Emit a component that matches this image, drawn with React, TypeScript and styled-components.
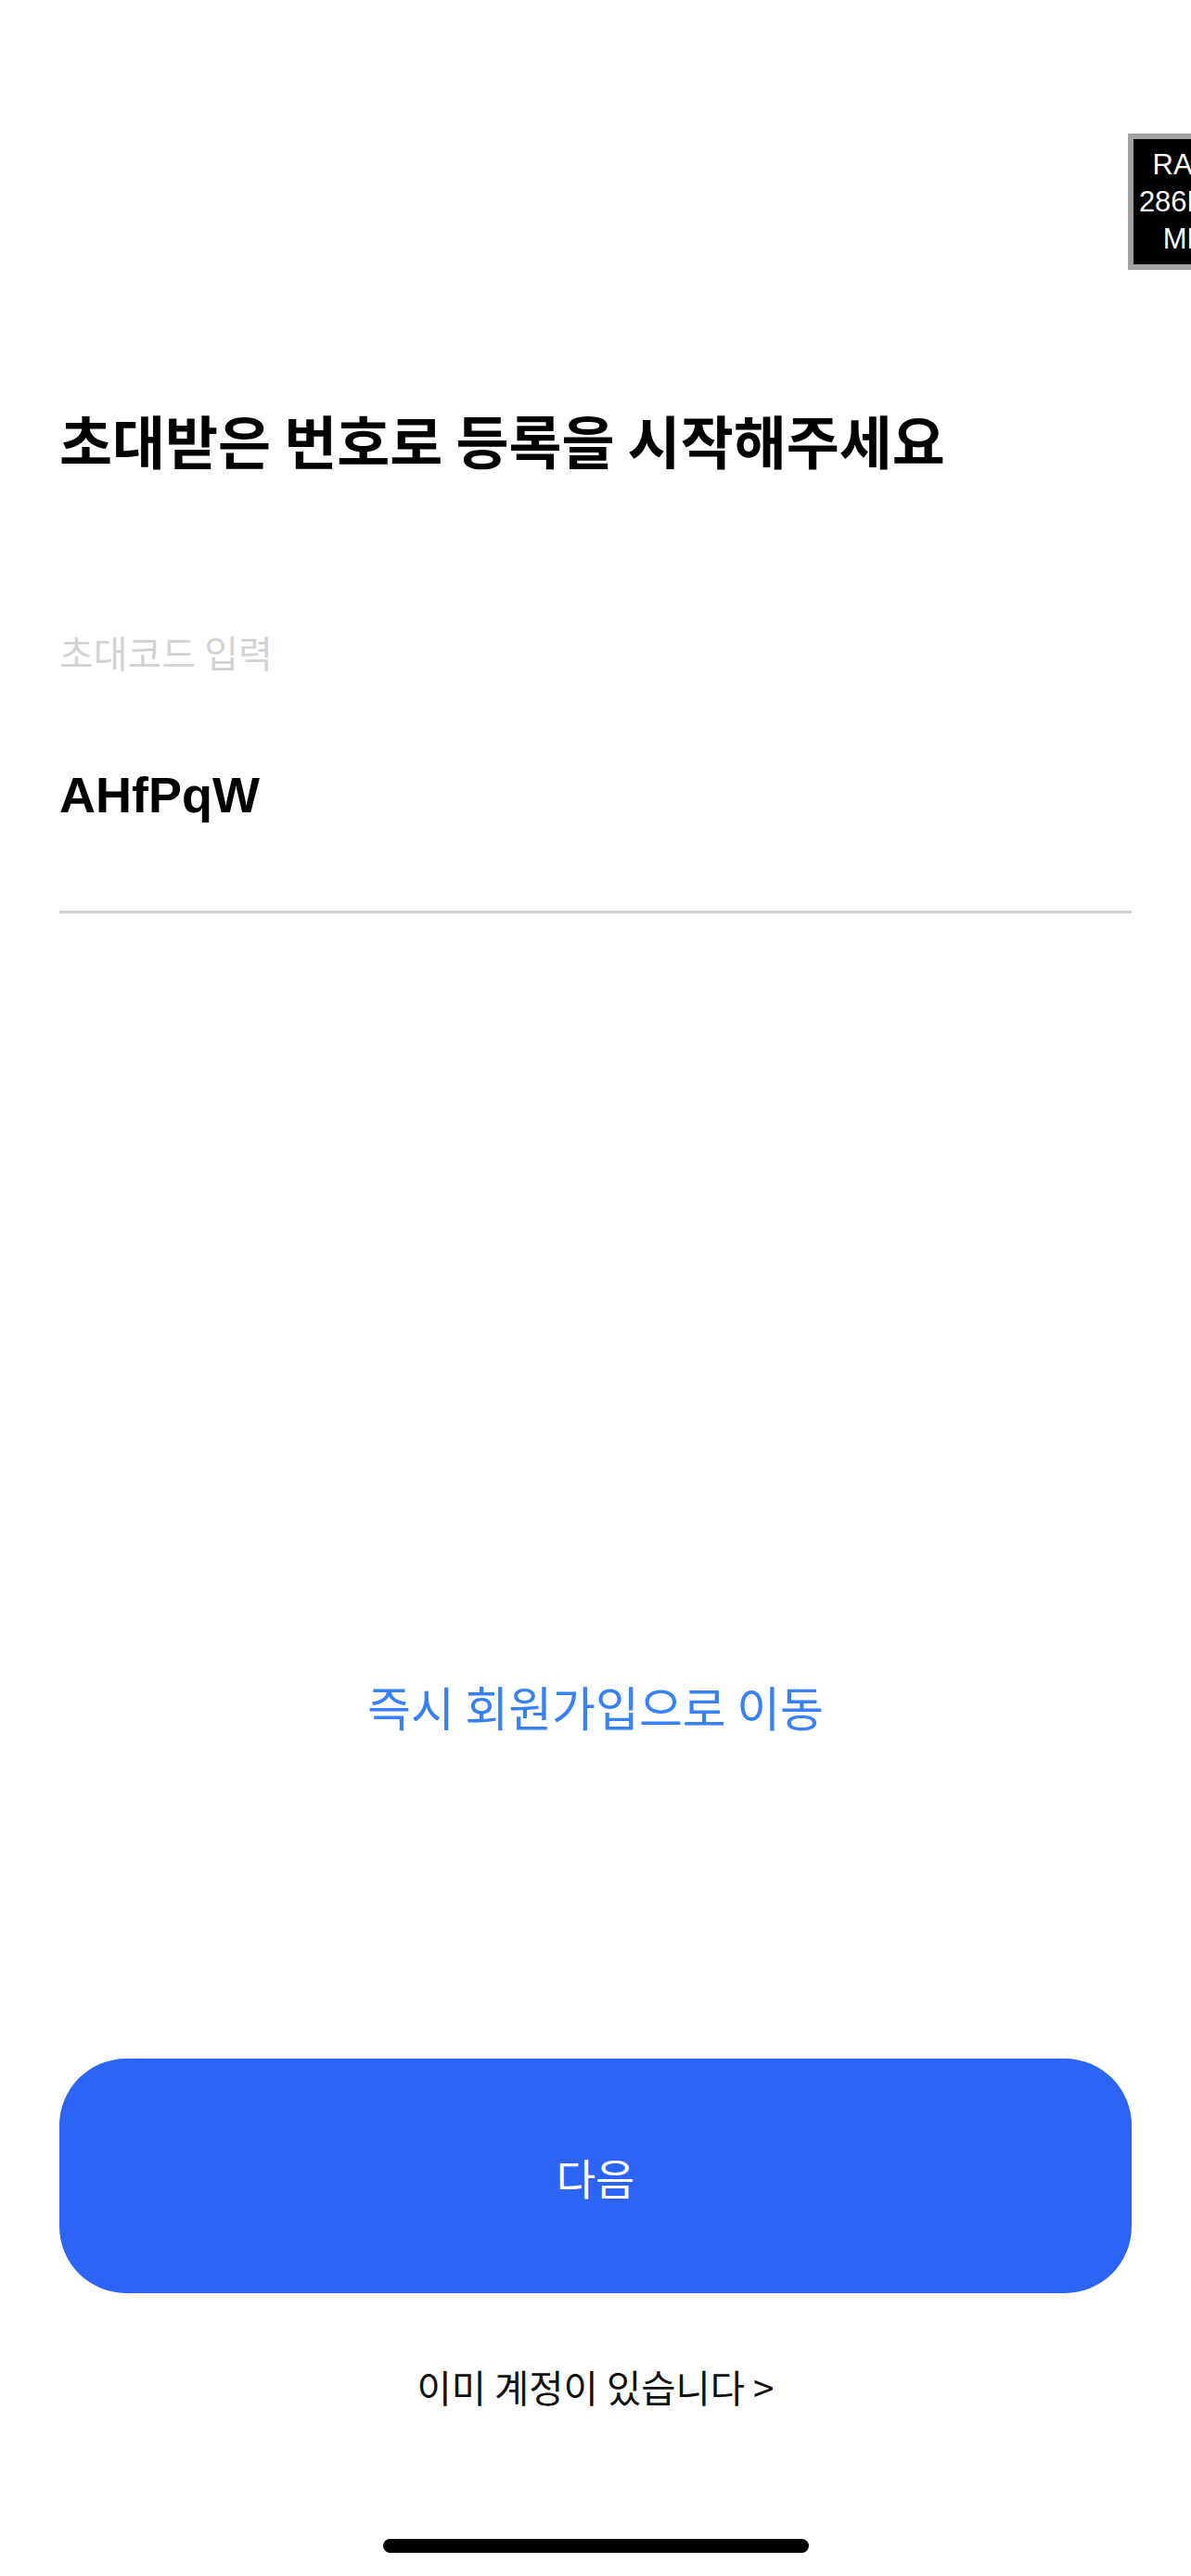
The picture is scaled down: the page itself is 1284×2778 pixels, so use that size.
import styled, { createGlobalStyle } from 'styled-components';

const GlobalStyle = createGlobalStyle`
  html, body {
    margin: 0;
    padding: 0;
    background: #ffffff;
  }
  body {
    font-family: "Noto Sans CJK KR", "Noto Sans", sans-serif;
    -webkit-font-smoothing: antialiased;
  }
`;

const Screen = styled.div`
  position: relative;
  width: 1284px;
  height: 2778px;
  overflow: hidden;
  display: flex;
  flex-direction: column;
  padding: 0 64px;
  box-sizing: border-box;
  background: #ffffff;
`;

// debug memory overlay, clipped by the right edge like on the device
const MemoryBadge = styled.div`
  position: absolute;
  top: 144px;
  left: 1216px;
  width: 110px;
  padding: 8px 0 7px;
  background: #000000;
  border: 6px solid #a3a3a3;
  color: #ffffff;
  font-family: "Liberation Sans", Arial, sans-serif;
  font-size: 31px;
  line-height: 40px;
  text-align: center;
  white-space: nowrap;
`;

const Title = styled.h1`
  margin: 437px 0 0;
  font-size: 62px;
  line-height: 75px;
  font-weight: 700;
  color: #000000;
`;

const Field = styled.label`
  display: flex;
  flex-direction: column;
  margin-top: 165px;
  border-bottom: 3px solid #d1d1d1;
  padding-bottom: 93px;
`;

const FieldLabel = styled.span`
  font-size: 40px;
  line-height: 52px;
  color: #d3d3d3;
`;

const FieldValue = styled.span`
  margin-top: 96px;
  font-family: "Liberation Sans", Arial, sans-serif;
  font-size: 54px;
  line-height: 64px;
  font-weight: 700;
  color: #000000;
`;

const TextLink = styled.a<{ $tone: 'blue' | 'dark' }>`
  align-self: center;
  color: ${p => (p.$tone === 'blue' ? '#3781f5' : '#111111')};
  font-size: ${p => (p.$tone === 'blue' ? '51px' : '40.5px')};
  line-height: ${p => (p.$tone === 'blue' ? '60px' : '50px')};
  text-decoration: none;
  cursor: pointer;
`;

const SignupLink = styled(TextLink)`
  margin-top: 825px;
`;

const LoginLink = styled(TextLink)`
  margin-top: 76px;
`;

const NextButton = styled.button`
  margin-top: 350px;
  height: 253px;
  width: 100%;
  border: none;
  border-radius: 72px;
  background: #2c64f6;
  color: #ffffff;
  font-family: inherit;
  font-size: 46px;
  font-weight: 400;
  cursor: pointer;
`;

const HomeIndicator = styled.div`
  align-self: center;
  margin-top: 139px;
  width: 459px;
  height: 15px;
  border-radius: 8px;
  background: #000000;
`;

export default function App() {
  return (
    <>
      <GlobalStyle />
      <Screen>
        <MemoryBadge>
          RAM
          <br />
          286MB
          <br />
          MB
        </MemoryBadge>
        <Title>초대받은 번호로 등록을 시작해주세요</Title>
        <Field>
          <FieldLabel>초대코드 입력</FieldLabel>
          <FieldValue>AHfPqW</FieldValue>
        </Field>
        <SignupLink $tone="blue">즉시 회원가입으로 이동</SignupLink>
        <NextButton>다음</NextButton>
        <LoginLink $tone="dark">이미 계정이 있습니다 &gt;</LoginLink>
        <HomeIndicator />
      </Screen>
    </>
  );
}
